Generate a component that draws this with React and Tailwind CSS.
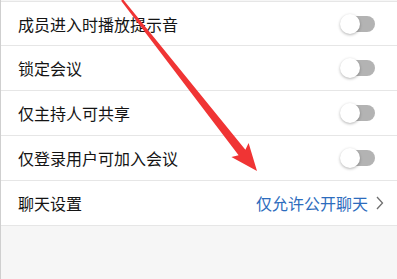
import React from "react";

const rows = [
  { label: "成员进入时播放提示音", type: "switch" },
  { label: "锁定会议", type: "switch" },
  { label: "仅主持人可共享", type: "switch" },
  { label: "仅登录用户可加入会议", type: "switch" },
  { label: "聊天设置", type: "link", value: "仅允许公开聊天" },
];

const Toggle = () => (
  <div className="relative w-[35px] h-[20px] mr-[9px]">
    <div className="absolute top-[2px] bottom-[2px] left-[6px] right-0 rounded-full bg-[#b3b3b3]" />
    <div className="absolute left-0 top-0 w-[20px] h-[20px] rounded-full bg-white shadow-[0_1px_3px_rgba(0,0,0,0.3)]" />
  </div>
);

const App = () => {
  return (
    <div
      className="relative w-[397px] h-[279px] overflow-hidden bg-[#f6f6f6] border-l border-[#cfcfcf]"
      style={{ fontFamily: '"Noto Sans CJK SC", "Noto Sans", sans-serif' }}
    >
      <div className="mt-px border-t border-[#e6e6e6] bg-white">
        {rows.map((row, index) => (
          <div
            key={index}
            className={`flex items-center justify-between pl-[17px] pr-[13px] border-b border-[#e6e6e6] ${
              index === 0 ? "h-[44px]" : "h-[45px]"
            }`}
          >
            <span className="text-[16px] text-[#141414] leading-none">{row.label}</span>
            {row.type === "switch" ? (
              <Toggle />
            ) : (
              <div className="flex items-center gap-[8px]">
                <span className="text-[16px] text-[#2d6cbd] leading-none">{row.value}</span>
                <svg width="8" height="14" viewBox="0 0 8 14" fill="none">
                  <path d="M1 1l5.5 6L1 13" stroke="#6f6f6f" strokeWidth="1.3" />
                </svg>
              </div>
            )}
          </div>
        ))}
      </div>

      {/* red annotation arrow */}
      <svg className="absolute left-0 top-0 pointer-events-none" width="397" height="279" viewBox="0 0 397 279">
        <polygon
          points="121.9,-0.8 244.4,149.7 247.6,143.1 256,171 230.4,156.9 237.6,155.2 120.1,0.8"
          fill="#f03434"
        />
      </svg>
    </div>
  );
};

export default App;
